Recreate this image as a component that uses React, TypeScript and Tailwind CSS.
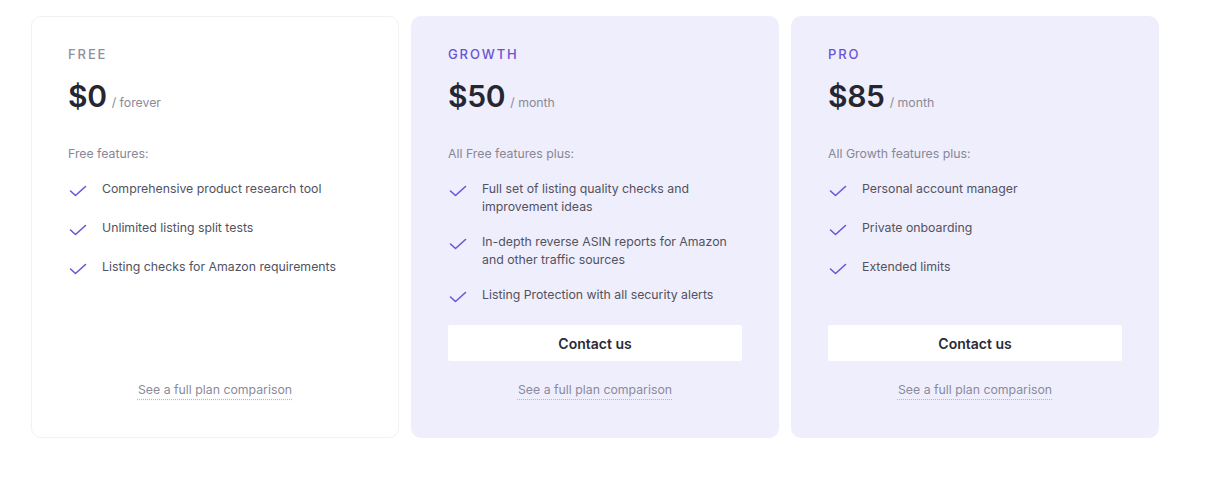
import React from "react";

type Plan = {
  name: string;
  price: string;
  period: string;
  intro: string;
  features: string[];
  highlight: boolean;
  button: boolean;
};

const plans: Plan[] = [
  {
    name: "FREE",
    price: "$0",
    period: "/ forever",
    intro: "Free features:",
    features: [
      "Comprehensive product research tool",
      "Unlimited listing split tests",
      "Listing checks for Amazon requirements",
    ],
    highlight: false,
    button: false,
  },
  {
    name: "GROWTH",
    price: "$50",
    period: "/ month",
    intro: "All Free features plus:",
    features: [
      "Full set of listing quality checks and improvement ideas",
      "In-depth reverse ASIN reports for Amazon and other traffic sources",
      "Listing Protection with all security alerts",
    ],
    highlight: true,
    button: true,
  },
  {
    name: "PRO",
    price: "$85",
    period: "/ month",
    intro: "All Growth features plus:",
    features: ["Personal account manager", "Private onboarding", "Extended limits"],
    highlight: true,
    button: true,
  },
];

function Check() {
  return (
    <svg width="20" height="22" viewBox="0 0 20 22" fill="none" className="shrink-0">
      <path
        d="M2.5 11 L7.5 15.5 L17.5 6.5"
        stroke="#6b55d9"
        strokeWidth="1.6"
        strokeLinecap="round"
        strokeLinejoin="round"
      />
    </svg>
  );
}

function Card({ plan }: { plan: Plan }) {
  return (
    <div
      className={
        plan.highlight
          ? "flex flex-col rounded-[10px] bg-[#efeefc] px-[37px] pt-[30px] pb-[39px]"
          : "flex flex-col rounded-[10px] bg-white border border-[#f2f2f5] shadow-[0_0_2px_rgba(0,0,0,0.02)] px-[36px] pt-[29px] pb-[38px]"
      }
    >
      <div
        className={
          "text-[13px] leading-[16px] font-medium tracking-[1.9px] " +
          (plan.highlight ? "text-[#6a52d6]" : "text-[#8f8f9c]")
        }
      >
        {plan.name}
      </div>
      <div className="mt-[14px] flex items-baseline gap-[5px]">
        <span className="text-[30px] leading-[40px] font-semibold text-[#262631] tracking-[-0.3px]">
          {plan.price}
        </span>
        <span className="text-[12.3px] text-[#8a8a96]">{plan.period}</span>
      </div>
      <div className="mt-[29px] text-[12.3px] leading-[18px] text-[#878796]">{plan.intro}</div>
      <ul className="mt-[17px] flex flex-col gap-[17px]">
        {plan.features.map((f) => (
          <li key={f} className="flex items-start gap-[14px]">
            <Check />
            <span className="text-[12.3px] leading-[18px] text-[#52525f]">{f}</span>
          </li>
        ))}
      </ul>
      <div className="mt-auto flex flex-col">
        {plan.button ? (
          <button className="mt-[17px] h-[36px] w-full rounded-[2px] bg-white text-[14px] font-semibold text-[#2b2b36]">
            Contact us
          </button>
        ) : null}
        <div className="mt-[20px] flex justify-center">
          <a className="text-[12.3px] leading-[18px] text-[#8a8a9c] underline decoration-dotted decoration-[#b5b5c4] underline-offset-[5px]">
            See a full plan comparison
          </a>
        </div>
      </div>
    </div>
  );
}

export default function App() {
  return (
    <div
      className="w-[1222px] h-[477px] bg-white pl-[31px] pt-[16px]"
      style={{ fontFamily: "Inter, 'Noto Sans', sans-serif" }}
    >
      <div className="grid grid-cols-[368px_368px_368px] gap-[12px]">
        {plans.map((p) => (
          <Card key={p.name} plan={p} />
        ))}
      </div>
    </div>
  );
}
